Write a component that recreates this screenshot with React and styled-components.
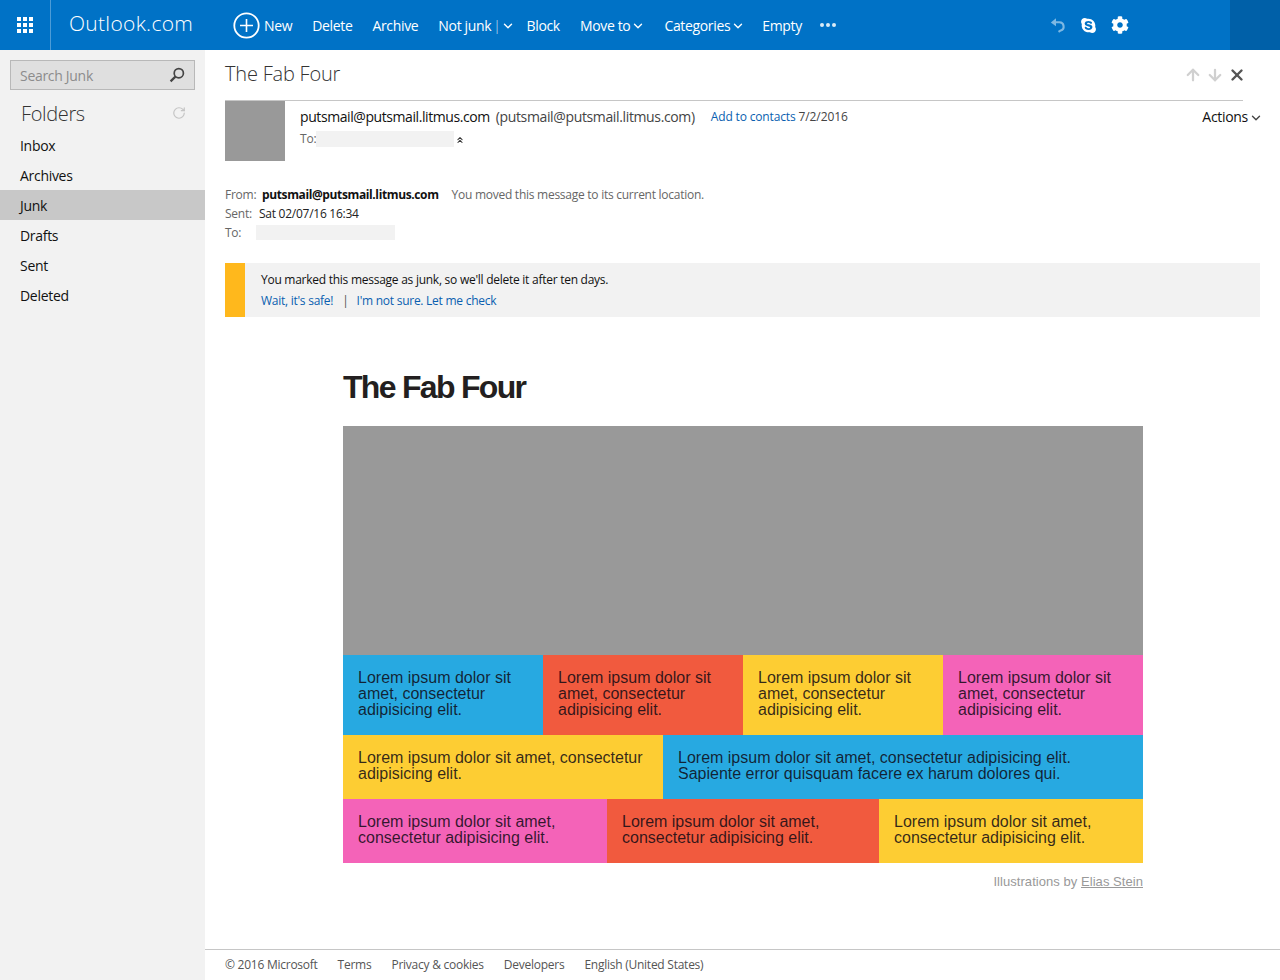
import React from "react";
import styled, { createGlobalStyle } from "styled-components";
import { ArrowUp, ArrowDown, X, ChevronDown, ChevronsUp, RotateCw } from "lucide-react";
import { FaSkype, FaCog } from "react-icons/fa";

const UI_FONT = `"Open Sans", "Noto Sans", sans-serif`;
const MAIL_FONT = `"Liberation Sans", Arial, sans-serif`;

const GlobalStyle = createGlobalStyle`
  html, body {
    margin: 0;
    padding: 0;
    background: #fff;
    font-family: ${UI_FONT};
  }
  * { box-sizing: border-box; }
`;

const Page = styled.div`
  width: 1280px;
  height: 980px;
  display: flex;
  flex-direction: column;
  overflow: hidden;
`;

const Header = styled.header`
  flex: 0 0 50px;
  display: flex;
  align-items: center;
  background: #0072c6;
  color: #fff;
`;

const AppsButton = styled.div`
  width: 51px;
  height: 50px;
  display: flex;
  align-items: center;
  justify-content: center;
  border-right: 1px solid #4d9cd7;
`;

const Brand = styled.div`
  width: 182px;
  padding-left: 18px;
  font-size: 21px;
  font-weight: 300;
  letter-spacing: 0.3px;
  position: relative;
  top: -2px;
`;

const Toolbar = styled.nav`
  display: flex;
  align-items: center;
  gap: 20px;
  flex: 1;
`;

const Action = styled.span`
  display: inline-flex;
  align-items: center;
  font-size: 14px;
  letter-spacing: -0.34px;
  white-space: nowrap;
`;

const NewAction = styled(Action)`
  gap: 4px;
`;

const MenuAction = styled(Action)`
  padding-right: 2px;
`;

const Divider = styled.span`
  margin-left: 2px;
  font-weight: 300;
  opacity: 0.8;
`;

const Caret = styled(ChevronDown)`
  flex: none;
  margin: 2px ${(p) => (p.$tight ? -8 : -3)}px 0 ${(p) => (p.$tight ? 0 : 1)}px;
`;

const Dots = styled.span`
  display: inline-flex;
  gap: 2px;
  margin-left: -2px;
`;

const Dot = styled.i`
  width: 4px;
  height: 4px;
  border-radius: 50%;
  background: #d9ebf7;
`;

const HeaderIcons = styled.div`
  display: flex;
  align-items: center;
  gap: 14px;
  margin-right: 101px;
`;

const AccountBlock = styled.div`
  width: 50px;
  height: 50px;
  background: #0060a8;
`;

const Body = styled.div`
  flex: 1;
  display: flex;
  min-height: 0;
`;

const Sidebar = styled.aside`
  width: 205px;
  background: #f2f2f2;
  padding-top: 10px;
`;

const SearchBox = styled.div`
  width: 185px;
  height: 30px;
  margin-left: 10px;
  padding: 0 9px;
  display: flex;
  align-items: center;
  justify-content: space-between;
  background: #dfdfdf;
  border: 1px solid #b8b8b8;
  color: #8c8c8c;
  font-size: 14px;
  letter-spacing: -0.3px;
`;

const FoldersHead = styled.div`
  height: 30px;
  margin-top: 8px;
  padding: 0 19px 0 21px;
  display: flex;
  align-items: center;
  justify-content: space-between;
  font-size: 20px;
  font-weight: 300;
  letter-spacing: -0.35px;
  color: #333;
`;

const FolderList = styled.ul`
  list-style: none;
  margin: 2px 0 0;
  padding: 0;
`;

const Folder = styled.li`
  height: 30px;
  padding-left: 20px;
  display: flex;
  align-items: center;
  font-size: 14px;
  letter-spacing: -0.3px;
  color: #111;
  background: ${(p) => (p.$active ? "#c8c8c8" : "transparent")};
`;

const Main = styled.main`
  flex: 1;
  display: flex;
  flex-direction: column;
  min-width: 0;
`;

const MessagePane = styled.div`
  flex: 1;
  padding: 0 20px;
`;

const TitleBar = styled.div`
  width: 1018px;
  height: 51px;
  display: flex;
  align-items: center;
  justify-content: space-between;
  border-bottom: 1px solid #c6c6c6;
`;

const Subject = styled.h2`
  margin: 0;
  position: relative;
  top: -2px;
  font-size: 20px;
  font-weight: 300;
  letter-spacing: -0.2px;
  color: #333;
`;

const NavIcons = styled.div`
  display: flex;
  align-items: center;
  gap: 4px;
  margin-right: -3px;
`;

const SenderRow = styled.div`
  display: flex;
  align-items: flex-start;
`;

const Avatar = styled.div`
  width: 60px;
  height: 60px;
  background: #999;
`;

const SenderInfo = styled.div`
  flex: 1;
  padding: 6px 0 0 15px;
`;

const SenderLine = styled.div`
  height: 18px;
  display: flex;
  align-items: center;
  font-size: 14px;
  letter-spacing: -0.42px;
  color: #111;
`;

const SenderAddress = styled.span`
  margin-left: 6px;
  letter-spacing: -0.36px;
  color: #444;
`;

const MailLink = styled.a`
  color: #0a5fb0;
`;

const AddContact = styled(MailLink)`
  margin-left: 16px;
  font-size: 12px;
  letter-spacing: -0.15px;
`;

const DateText = styled.span`
  margin-left: 3px;
  font-size: 12px;
  letter-spacing: -0.1px;
  color: #444;
`;

const ToLine = styled.div`
  margin-top: 5px;
  display: flex;
  align-items: center;
  font-size: 12px;
  letter-spacing: -0.2px;
  color: #666;
`;

const Redacted = styled.span`
  display: block;
  height: ${(p) => p.$h}px;
  width: ${(p) => p.$w}px;
  background: #f2f2f2;
`;

const Expand = styled(ChevronsUp)`
  margin: 2px 0 0 1px;
`;

const ActionsMenu = styled.div`
  display: flex;
  align-items: center;
  padding: 6px 0 0;
  font-size: 14px;
  letter-spacing: -0.3px;
  color: #111;
`;

const Details = styled.div`
  margin-top: 24px;
  font-size: 12px;
  letter-spacing: -0.26px;
  color: #666;
`;

const DetailRow = styled.div`
  height: ${(p) => p.$h || 19}px;
  display: flex;
  align-items: center;
`;

const DetailLabel = styled.span`
  width: ${(p) => p.$w}px;
`;

const DetailValue = styled.span`
  color: #222;
`;

const FromValue = styled.strong`
  font-weight: 700;
  color: #111;
  letter-spacing: -0.38px;
`;

const MovedNote = styled.span`
  margin-left: 13px;
  color: #666;
`;

const JunkBanner = styled.div`
  margin-top: 20px;
  height: 54px;
  display: flex;
  background: #f2f2f2;
`;

const BannerStripe = styled.div`
  width: 20px;
  background: #ffb81c;
`;

const BannerBody = styled.div`
  padding: 6px 0 0 16px;
  font-size: 12px;
  letter-spacing: -0.26px;
  color: #111;
`;

const BannerLine = styled.div`
  height: 20px;
  margin-bottom: 1px;
  display: flex;
  align-items: center;
`;

const Pipe = styled.span`
  margin: 0 8px 0 9px;
  color: #555;
`;

const Email = styled.article`
  width: 800px;
  margin: 49px 0 0 118px;
  font-family: ${MAIL_FONT};
`;

const EmailTitle = styled.h1`
  margin: 0 0 18px;
  font-size: 32px;
  line-height: 42px;
  font-weight: 700;
  letter-spacing: -1.7px;
  color: #231f20;
`;

const Hero = styled.div`
  height: 229px;
  background: #999;
`;

const TileRow = styled.div`
  display: flex;
`;

const Tile = styled.div`
  width: ${(p) => p.$w}px;
  padding: 15px 15px 17px;
  background: ${(p) => p.$bg};
  font-size: 16px;
  line-height: 16px;
  color: rgba(15, 10, 20, 0.85);
`;

const Credit = styled.p`
  margin: 10px 0 0;
  text-align: right;
  font-size: 13px;
  line-height: 18px;
  letter-spacing: 0.05px;
  color: #999;
`;

const CreditLink = styled.a`
  color: #999;
  text-decoration: underline;
`;

const Footer = styled.footer`
  flex: 0 0 31px;
  padding: 0 0 2px 20px;
  display: flex;
  align-items: center;
  gap: 20px;
  border-top: 1px solid #c6c6c6;
  font-size: 12px;
  letter-spacing: -0.25px;
  color: #555;
`;

const BLUE = "#27a9e1";
const RED = "#f15a3e";
const YELLOW = "#fdcd33";
const PINK = "#f463b8";
const SHORT = "Lorem ipsum dolor sit amet, consectetur adipisicing elit.";
const LONG = "Lorem ipsum dolor sit amet, consectetur adipisicing elit. Sapiente error quisquam facere ex harum dolores qui.";

const TILE_ROWS = [
  [
    { w: 200, bg: BLUE, text: SHORT },
    { w: 200, bg: RED, text: SHORT },
    { w: 200, bg: YELLOW, text: SHORT },
    { w: 200, bg: PINK, text: SHORT },
  ],
  [
    { w: 320, bg: YELLOW, text: SHORT },
    { w: 480, bg: BLUE, text: LONG },
  ],
  [
    { w: 264, bg: PINK, text: SHORT },
    { w: 272, bg: RED, text: SHORT },
    { w: 264, bg: YELLOW, text: SHORT },
  ],
];

const FOLDERS = ["Inbox", "Archives", "Junk", "Drafts", "Sent", "Deleted"];

const AppsIcon = () => (
  <svg width="16" height="16" viewBox="0 0 16 16" fill="#fff">
    {[0, 6, 12].map((y) =>
      [0, 6, 12].map((x) => <rect key={`${x}-${y}`} x={x} y={y} width="4" height="4" />)
    )}
  </svg>
);

const PlusCircle = () => (
  <svg width="27" height="27" viewBox="0 0 27 27" fill="none" stroke="#fff">
    <circle cx="13.5" cy="13.5" r="12.2" strokeWidth="1.8" />
    <path d="M13.5 7v13M7 13.5h13" strokeWidth="1.6" />
  </svg>
);

const SearchIcon = () => (
  <svg width="16" height="16" viewBox="0 0 16 16" fill="none" stroke="#444">
    <circle cx="9.8" cy="6.2" r="4.6" strokeWidth="1.7" />
    <path d="M6.4 9.6 1.6 14.4" strokeWidth="2.2" />
  </svg>
);

const UndoIcon = () => (
  <svg width="16" height="16" viewBox="0 0 16 16" fill="none">
    <path d="M3.5 5.2H9.5a4.2 4.2 0 0 1 1.2 8.2L8.5 14.8" stroke="#7db8e3" strokeWidth="2.1" />
    <path d="M0.8 5.4 6 1.2v8z" fill="#7db8e3" />
  </svg>
);

const App = () => (
  <Page>
    <GlobalStyle />
    <Header>
      <AppsButton>
        <AppsIcon />
      </AppsButton>
      <Brand>Outlook.com</Brand>
      <Toolbar>
        <NewAction>
          <PlusCircle />
          New
        </NewAction>
        <Action>Delete</Action>
        <Action>Archive</Action>
        <Action>
          Not junk<Divider>|</Divider>
          <Caret $tight size={14} color="#fff" strokeWidth={2.4} />
        </Action>
        <Action>Block</Action>
        <MenuAction>
          Move to
          <Caret size={14} color="#fff" strokeWidth={2.4} />
        </MenuAction>
        <Action>
          Categories
          <Caret size={14} color="#fff" strokeWidth={2.4} />
        </Action>
        <Action>Empty</Action>
        <Dots>
          <Dot />
          <Dot />
          <Dot />
        </Dots>
      </Toolbar>
      <HeaderIcons>
        <UndoIcon />
        <FaSkype size={17} color="#fff" />
        <FaCog size={18} color="#fff" />
      </HeaderIcons>
      <AccountBlock />
    </Header>
    <Body>
      <Sidebar>
        <SearchBox>
          Search Junk
          <SearchIcon />
        </SearchBox>
        <FoldersHead>
          Folders
          <RotateCw size={14} color="#c4c4c4" strokeWidth={2} />
        </FoldersHead>
        <FolderList>
          {FOLDERS.map((name) => (
            <Folder key={name} $active={name === "Junk"}>
              {name}
            </Folder>
          ))}
        </FolderList>
      </Sidebar>
      <Main>
        <MessagePane>
          <TitleBar>
            <Subject>The Fab Four</Subject>
            <NavIcons>
              <ArrowUp size={18} color="#d0d0d0" strokeWidth={3} />
              <ArrowDown size={18} color="#d0d0d0" strokeWidth={3} />
              <X size={18} color="#555" strokeWidth={3.2} />
            </NavIcons>
          </TitleBar>
          <SenderRow>
            <Avatar />
            <SenderInfo>
              <SenderLine>
                putsmail@putsmail.litmus.com
                <SenderAddress>(putsmail@putsmail.litmus.com)</SenderAddress>
                <AddContact>Add to contacts</AddContact>
                <DateText>7/2/2016</DateText>
              </SenderLine>
              <ToLine>
                To:
                <Redacted $w={138} $h={16} />
                <Expand size={10} color="#333" strokeWidth={2.5} />
              </ToLine>
            </SenderInfo>
            <ActionsMenu>
              Actions
              <Caret size={14} color="#444" strokeWidth={2.4} />
            </ActionsMenu>
          </SenderRow>
          <Details>
            <DetailRow>
              <DetailLabel $w={37}>From:</DetailLabel>
              <FromValue>putsmail@putsmail.litmus.com</FromValue>
              <MovedNote>You moved this message to its current location.</MovedNote>
            </DetailRow>
            <DetailRow $h={18}>
              <DetailLabel $w={34}>Sent:</DetailLabel>
              <DetailValue>Sat 02/07/16 16:34</DetailValue>
            </DetailRow>
            <DetailRow $h={21}>
              <DetailLabel $w={31}>To:</DetailLabel>
              <Redacted $w={139} $h={15} />
            </DetailRow>
          </Details>
          <JunkBanner>
            <BannerStripe />
            <BannerBody>
              <BannerLine>You marked this message as junk, so we'll delete it after ten days.</BannerLine>
              <BannerLine>
                <MailLink>Wait, it's safe!</MailLink>
                <Pipe>|</Pipe>
                <MailLink>I'm not sure. Let me check</MailLink>
              </BannerLine>
            </BannerBody>
          </JunkBanner>
          <Email>
            <EmailTitle>The Fab Four</EmailTitle>
            <Hero />
            {TILE_ROWS.map((row, i) => (
              <TileRow key={i}>
                {row.map((tile, j) => (
                  <Tile key={j} $w={tile.w} $bg={tile.bg}>
                    {tile.text}
                  </Tile>
                ))}
              </TileRow>
            ))}
            <Credit>
              Illustrations by <CreditLink>Elias Stein</CreditLink>
            </Credit>
          </Email>
        </MessagePane>
        <Footer>
          <span>© 2016 Microsoft</span>
          <span>Terms</span>
          <span>Privacy &amp; cookies</span>
          <span>Developers</span>
          <span>English (United States)</span>
        </Footer>
      </Main>
    </Body>
  </Page>
);

export default App;
